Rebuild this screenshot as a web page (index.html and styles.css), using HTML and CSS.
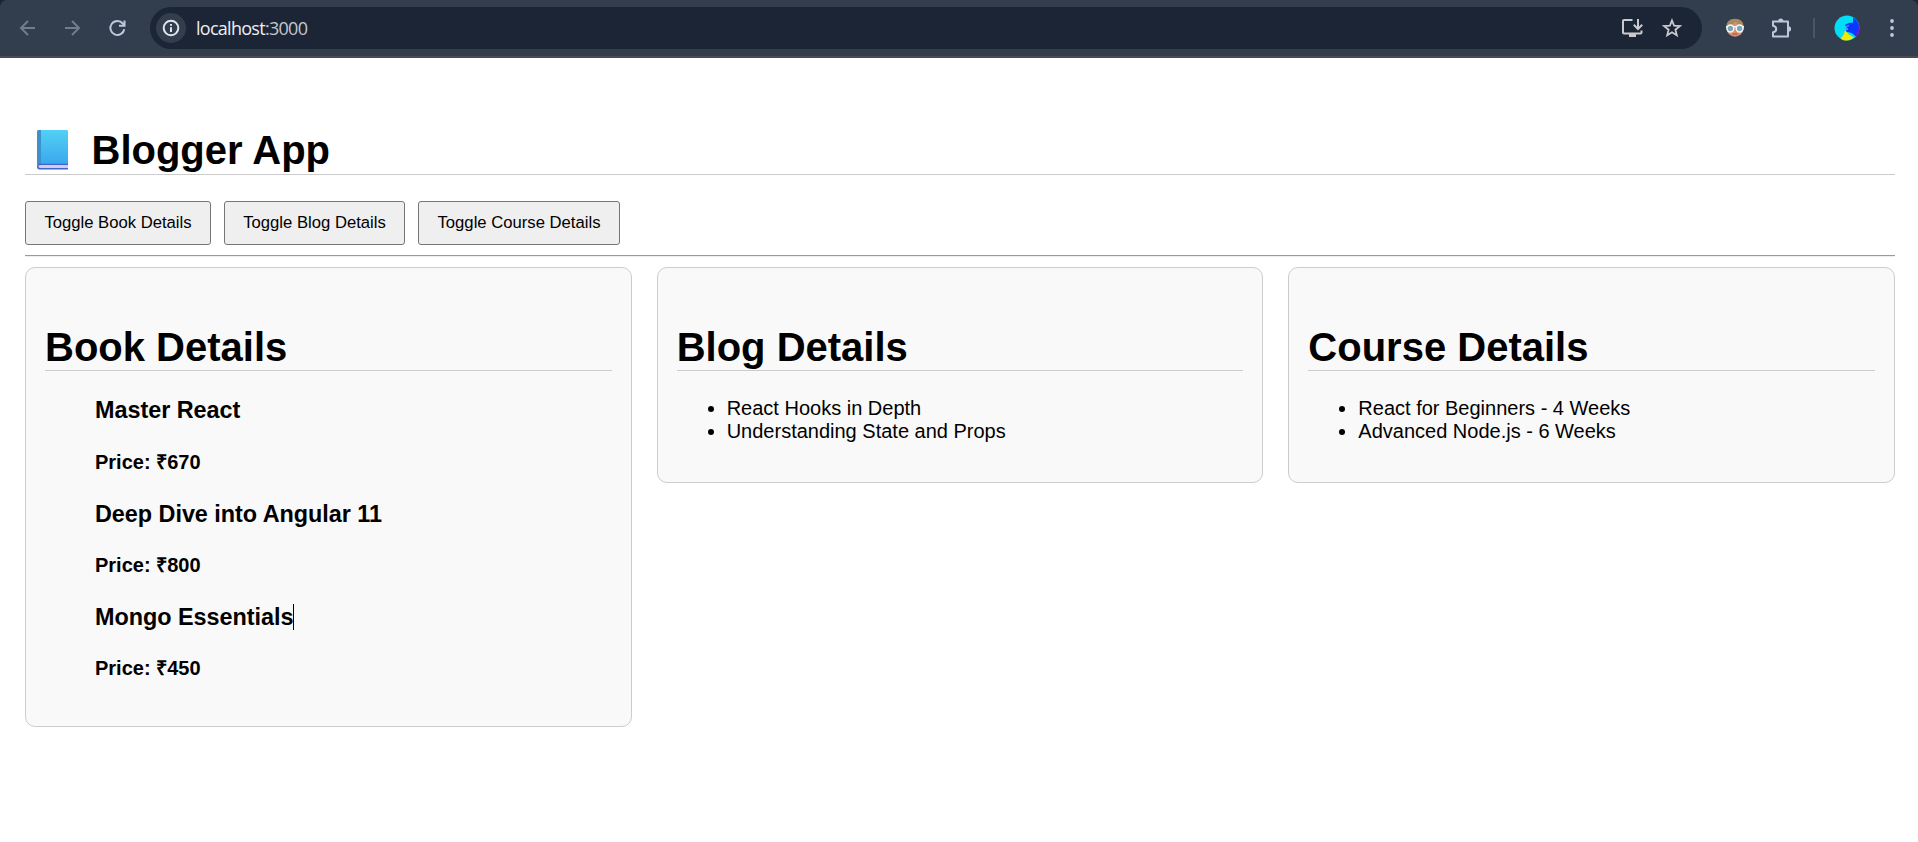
FILE: index.html
```html
<!DOCTYPE html>
<html lang="en">
<head>
<meta charset="utf-8">
<title>Blogger App</title>
<link rel="stylesheet" href="styles.css">
</head>
<body>
<header class="toolbar">
  <nav class="nav">
    <svg class="dim" width="22" height="22" viewBox="0 0 22 22"><path d="M18 11H4M11 4L4 11l7 7" /></svg>
    <svg class="dim" width="22" height="22" viewBox="0 0 22 22"><path d="M3 11H17M10 4l7 7-7 7" /></svg>
    <svg width="22" height="22" viewBox="0 0 22 22"><path d="M18.300 12.200A7 7 0 1 1 16.800 6.500L18.500 8.300" /><path d="M18.500 3.500V8.700H13" /></svg>
  </nav>
  <div class="omnibox">
    <span class="info"><svg width="18" height="18" viewBox="0 0 18 18"><circle cx="9" cy="9" r="7.300" /><path d="M9 8.200V13M9 4.900V6.700" /></svg></span>
    <span class="url">localhost<span class="port">:3000</span></span>
    <svg class="install" width="22" height="20" viewBox="0 0 22 20"><path d="M11.500 2H3Q2 2 2 3V14.500Q2 15.500 3 15.500H19.500Q20.500 15.500 20.500 14.500V12.500M17 1V10.500M12.800 6.800L17 11l4.200-4.200" /><path class="solid" d="M8 15h7v4H8z" /></svg>
    <svg class="star" width="20" height="20" viewBox="0 0 20 20"><path d="M10 2.500L12.100 7.700 17.800 8.100 13.400 11.700 14.800 17.200 10 14.200 5.200 17.200 6.600 11.700 2.200 8.100 7.900 7.700Z" /></svg>
  </div>
  <div class="actions">
    <svg class="face" width="20" height="20" viewBox="0 0 20 20">
      <circle cx="10" cy="10.500" r="8.300" fill="#d99070"/>
      <path d="M1.500 12Q0 1 10 .7 20 1 18.500 12L16.500 8Q12 7 11 3.500 8 7 3.500 8Z" fill="#a9895f"/>
      <path d="M1 8.700h18" stroke="#eef5f8" stroke-width="1.500"/>
      <circle cx="5.400" cy="10.500" r="3.400" fill="#7ca6b7" stroke="#f3f8fa" stroke-width="1.500"/>
      <circle cx="14.600" cy="10.500" r="3.400" fill="#7ca6b7" stroke="#f3f8fa" stroke-width="1.500"/>
      <path d="M7.500 16h5" stroke="#b9583f" stroke-width="1.200"/>
    </svg>
    <svg class="puzzle" width="22" height="22" viewBox="0 0 22 22"><path stroke-linejoin="round" d="M3 4.500H18V19.500H3V15.300Q6.200 14.800 6.200 12T3 8.700Z" /><path class="solid" d="M8.200 4a2.600 2.600 0 0 1 5.200 0zM18.500 9.300a2.600 2.600 0 0 1 0 5.200z"/></svg>
    <span class="sep"></span>
    <svg class="avatar" width="26" height="26" viewBox="0 0 26 26">
      <circle cx="13" cy="13" r="12.500" fill="#00dff5"/>
      <path d="M19 2.200A12.500 12.500 0 0 1 22 21.500L17.500 18 12 16.500 12.500 13 11 10 14.500 8 19 7.500Z" fill="#0638ff"/>
      <path d="M24.800 9A12.500 12.500 0 0 1 22 21.500L20.500 20Q24 15 24.800 9Z" fill="#5a18e8"/>
      <path d="M6.500 23.700L9.500 20 11 15.500 15.500 20 20 22.500Q13 28 6.500 23.700Z" fill="#f4e900"/>
      <path d="M15 10.500l-4 1.500 3 2-4 2" fill="none" stroke="#5aa7ff" stroke-width="1"/>
    </svg>
    <svg class="menu" width="6" height="20" viewBox="0 0 6 20"><circle cx="3" cy="3" r="1.900"/><circle cx="3" cy="10" r="1.900"/><circle cx="3" cy="17" r="1.900"/></svg>
  </div>
</header>
<main class="page">
  <h1 class="brand">
    <svg class="book" width="32" height="40" viewBox="0 0 32 41" preserveAspectRatio="none">
      <defs><linearGradient id="cover" x1="0" y1="0" x2="0" y2="1"><stop offset="0" stop-color="#52d0f3"/><stop offset="1" stop-color="#3aa7ee"/></linearGradient></defs>
      <rect x="0" y="0" width="31" height="36" rx="1.500" fill="url(#cover)"/>
      <path d="M0 2Q0 0 2 0H4V35H0Z" fill="#3c91cc"/>
      <path d="M31 34.500H2.500Q0 34.500 0 37.500T2.500 40.500H31V39H30V35.800H31Z" fill="#3f68c9"/>
      <path d="M3 36H31V38.900H3Q1.500 38.700 1.500 37.500T3 36Z" fill="#d9c8ee"/>
    </svg>
    <span>Blogger App</span>
  </h1>
  <div class="buttons">
    <button class="toggle toggle-book">Toggle Book Details</button>
    <button class="toggle toggle-blog">Toggle Blog Details</button>
    <button class="toggle toggle-course">Toggle Course Details</button>
  </div>
  <hr class="rule">
  <div class="cards">
    <section class="card">
      <h1 class="heading">Book Details</h1>
      <ul class="books">
        <li><h3>Master React</h3><h4>Price: ₹670</h4></li>
        <li><h3>Deep Dive into Angular 11</h3><h4>Price: ₹800</h4></li>
        <li><h3><span class="caret">Mongo Essentials</span></h3><h4>Price: ₹450</h4></li>
      </ul>
    </section>
    <section class="card">
      <h1 class="heading">Blog Details</h1>
      <ul class="list"><li>React Hooks in Depth</li><li>Understanding State and Props</li></ul>
    </section>
    <section class="card">
      <h1 class="heading">Course Details</h1>
      <ul class="list"><li>React for Beginners - 4 Weeks</li><li>Advanced Node.js - 6 Weeks</li></ul>
    </section>
  </div>
</main>
</body>
</html>
```
FILE: styles.css
```css
* { box-sizing: border-box; }
html { background: #fff; }
body { margin: 0; min-height: 842px; background: linear-gradient(#1c2535 10px, #fff 10px); color: #000; font: 20px/23px "Liberation Sans", Arial, sans-serif; }
h1, h3, h4, ul { margin: 0; padding: 0; }

.toolbar { display: flex; align-items: center; height: 58px; background: #323d4d; border-bottom: 2px solid #484b51; border-radius: 7px 7px 0 0; }
.toolbar svg { fill: none; stroke: #bdc8de; stroke-width: 2; flex: none; display: block; }
.toolbar .dim { stroke: #727c8b; }
.toolbar .solid { fill: #bdc8de; stroke: none; }
.nav { display: flex; gap: 22.500px; width: 150px; padding-left: 17px; }
.omnibox { display: flex; align-items: center; width: 1552px; height: 42px; border-radius: 21px; background: #1c2535; padding-left: 6px; }
.info { display: flex; align-items: center; justify-content: center; width: 30px; height: 30px; border-radius: 50%; background: #323d4d; }
.toolbar .info svg { stroke: #e3e5ee; }
.url { flex: 1; margin-left: 10px; color: #eceef3; font: 18px/24px "Open Sans", "Noto Sans", sans-serif; letter-spacing: -0.720px; }
.port { color: #c3c7cf; }
.toolbar .install { margin-right: 19px; stroke: #c9c9ce; }
.toolbar .install .solid { fill: #c9c9ce; }
.toolbar .star { margin-right: 20px; stroke: #c9c9ce; stroke-width: 1.800; }
.actions { display: flex; align-items: center; flex: 1; }
.toolbar .face, .toolbar .avatar { stroke: none; }
.face { margin-left: 23px; }
.puzzle { margin-left: 25px; }
.sep { width: 2px; height: 20px; margin-left: 21px; background: #4b5665; }
.avatar { margin-left: 19px; }
.toolbar .menu { margin-left: 29px; fill: #bdc8de; stroke: none; }

.page { padding: 70px 23px 0 25px; }
.brand { display: flex; align-items: flex-start; height: 47px; font-size: 40px; line-height: 44px; border-bottom: 1px solid #ccc; }
.brand span { margin-left: 22.500px; }
.book { margin: 2px 0 0 12px; }
.buttons { display: flex; gap: 13px; margin-top: 26px; }
.toggle { height: 44px; padding: 0; border: 1px solid #767676; border-radius: 3px; background: #efefef; color: #000; font: 16.670px "Liberation Sans", Arial, sans-serif; }
.toggle-book { width: 186px; }
.toggle-blog { width: 181px; }
.toggle-course { width: 202px; }
.rule { height: 2px; margin: 10px 0; border: 0; border-top: 1px solid #9a9a9a; background: #eee; }
.cards { display: grid; grid-template-columns: repeat(3, 1fr); gap: 25px; align-items: start; }
.card { border: 1px solid #ccc; border-radius: 10px; background: #f9f9f9; padding: 56px 19px 19px; }
.heading { height: 47px; font-size: 40px; line-height: 46px; border-bottom: 1px solid #ccc; }
.books { list-style: none; padding: 26px 0 27.500px 50px; display: grid; gap: 26.500px; }
.books h3 { font-size: 23.400px; line-height: 27px; margin-bottom: 26.500px; letter-spacing: -0.030px; }
.books li + li h3 { padding-top: 1px; margin-bottom: 25.500px; }
.books h4 { font-size: 20px; line-height: 23px; }
.caret { border-right: 1px solid #000; }
.list { padding: 26px 0 20px 50px; }
```
